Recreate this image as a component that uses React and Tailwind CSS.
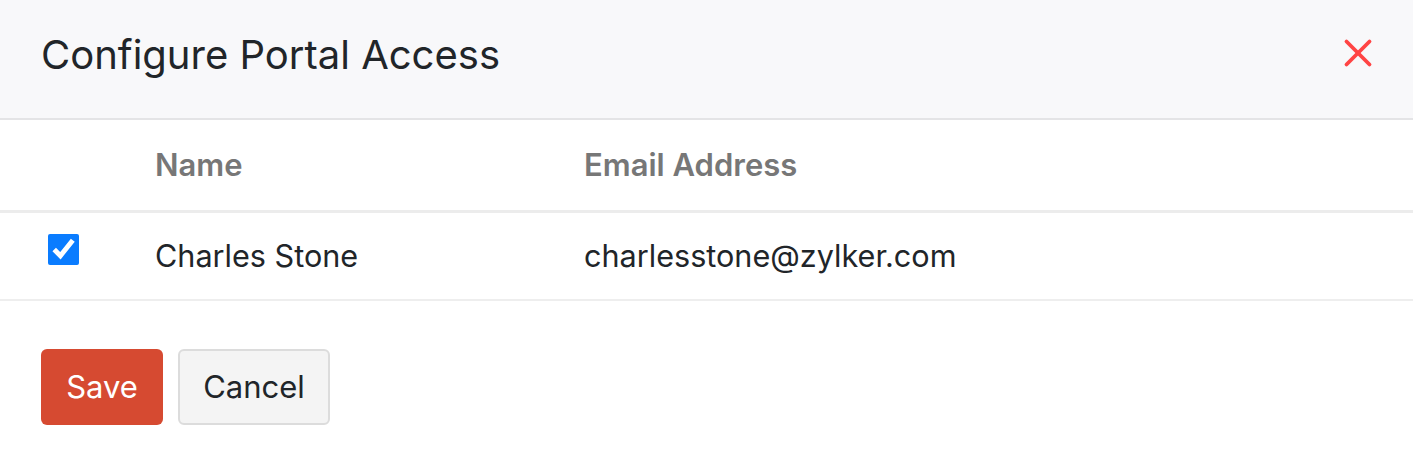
import { X } from 'lucide-react'

export default function App() {
  return (
    <div className="w-[1413px] h-[465px] bg-white text-[#212529]" style={{ fontFamily: 'Inter, "Noto Sans", sans-serif' }}>
      <div className="flex h-[120px] items-center justify-between border-b-2 border-[#e4e4e6] bg-[#f8f8fa] pb-[8px] pl-[41px] pr-[32px]">
        <h1 className="text-[40px] font-normal leading-none">Configure Portal Access</h1>
        <button type="button" className="-mt-[4px] text-[#ff4444]" aria-label="Close">
          <X size={46} strokeWidth={2} />
        </button>
      </div>

      <table className="w-full border-collapse">
        <thead>
          <tr className="h-[91px] border-b-[3px] border-[#ececec] text-left">
            <th className="w-[155px]"></th>
            <th className="w-[429px] text-[31px] font-semibold text-[#777]">Name</th>
            <th className="text-[31px] font-semibold text-[#777]">Email Address</th>
          </tr>
        </thead>
        <tbody>
          <tr className="h-[89px] border-b-2 border-[#eeeeee] text-[30.6px]">
            <td className="pl-[48px] align-top pt-[18px]">
              <input type="checkbox" defaultChecked className="h-[31px] w-[31px] accent-[#0a7cff]" />
            </td>
            <td>Charles Stone</td>
            <td>charlesstone@zylker.com</td>
          </tr>
        </tbody>
      </table>

      <div className="flex gap-[15px] pl-[41px] pt-[48px]">
        <button type="button" className="h-[76px] w-[122px] rounded-md bg-[#d64a31] text-[31px] text-white">
          Save
        </button>
        <button type="button" className="h-[76px] w-[152px] rounded-md border-2 border-[#dcdcdc] bg-[#f4f4f4] text-[31px] text-[#212529]">
          Cancel
        </button>
      </div>
    </div>
  )
}
